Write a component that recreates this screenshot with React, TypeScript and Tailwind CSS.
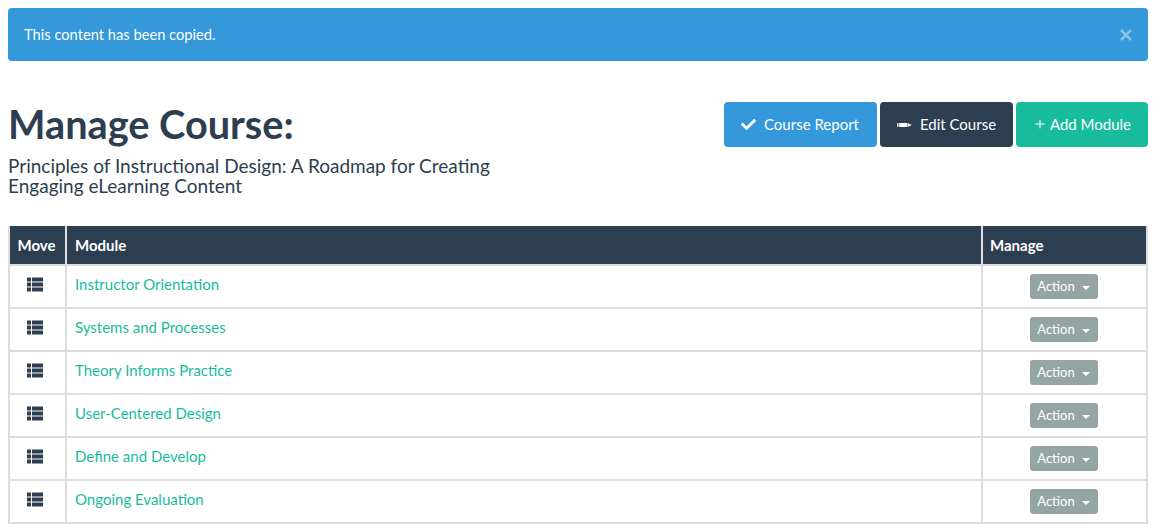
import { Plus } from "lucide-react";
import { FaCheck } from "react-icons/fa";

const modules = [
  "Instructor Orientation",
  "Systems and Processes",
  "Theory Informs Practice",
  "User-Centered Design",
  "Define and Develop",
  "Ongoing Evaluation",
];

const ListIcon = () => (
  <svg width="16" height="15" viewBox="0 0 16 15" className="block" fill="#2c3e50">
    <rect x="0" y="0.5" width="4" height="4" />
    <rect x="5" y="0.5" width="11" height="4" />
    <rect x="0" y="5.5" width="4" height="4" />
    <rect x="5" y="5.5" width="11" height="4" />
    <rect x="0" y="10.5" width="4" height="4" />
    <rect x="5" y="10.5" width="11" height="4" />
  </svg>
);

const PencilIcon = () => (
  <svg width="15" height="6" viewBox="0 0 15 6" fill="white">
    <path d="M0 1.2h1.5v3.6H0zM2.2 1h8.3v4H2.2zM11 1.2l3.8 1.8L11 4.8z" />
  </svg>
);

export default function App() {
  return (
    <div className="min-h-[532px] bg-white px-2 pt-2 font-['Lato','Open_Sans',sans-serif] text-[#2c3e50]">
      <div className="flex h-[53px] items-center justify-between rounded-[4px] bg-[#3498db] pl-4 pr-4 text-[14.7px] text-white">
        <span>This content has been copied.</span>
        <svg width="12" height="12" viewBox="0 0 12 12" className="opacity-40" stroke="white" strokeWidth="2.6">
          <path d="M1 1l10 10M11 1L1 11" />
        </svg>
      </div>

      <div className="mt-[41px] flex items-start justify-between">
        <div>
          <h1 className="-mt-[2px] text-[39.7px] leading-[47px] font-bold">Manage Course:</h1>
          <p className="mt-[9px] w-[500px] text-[19px] leading-5">
            Principles of Instructional Design: A Roadmap for Creating Engaging eLearning Content
          </p>
        </div>
        <div className="flex gap-[3px] text-[15px] text-white">
          <button className="flex h-[45px] w-[153px] items-center justify-center gap-2 rounded-[4px] bg-[#3498db] pr-px">
            <FaCheck size={15} />
            Course Report
          </button>
          <button className="flex h-[45px] w-[133px] items-center justify-center gap-2 rounded-[4px] bg-[#2c3e50]">
            <PencilIcon />
            Edit Course
          </button>
          <button className="flex h-[45px] w-[132px] items-center justify-center gap-[3px] rounded-[4px] bg-[#18bc9c]">
            <Plus size={14} strokeWidth={1.8} className="-mt-px" />
            Add Module
          </button>
        </div>
      </div>

      <table className="mt-[30px] w-[1140px] table-fixed border-collapse text-[15px]">
        <thead>
          <tr className="h-[39px] bg-[#2c3e50] text-left text-white">
            <th className="w-[57px] border-2 border-t-0 border-[#dddddd] pr-[2px] text-center font-bold">Move</th>
            <th className="border-2 border-t-0 border-[#dddddd] pl-2 font-bold">Module</th>
            <th className="w-[165px] border-2 border-t-0 border-[#dddddd] pl-[7px] font-bold">Manage</th>
          </tr>
        </thead>
        <tbody>
          {modules.map((name) => (
            <tr key={name} className="h-[43px]">
              <td className="border-2 border-[#dddddd] pb-[5px] pl-[17px]">
                <ListIcon />
              </td>
              <td className="border-2 border-[#dddddd] pb-[5px] pl-2 text-[#18bc9c]">{name}</td>
              <td className="border-2 border-[#dddddd] pb-[1px] pr-[2px]">
                <button className="mx-auto flex h-[25px] w-[68px] items-center justify-center gap-[7px] rounded-[3px] bg-[#95a5a6] pt-[2px] text-[13px] text-white">
                  Action
                  <span className="mt-[2px] border-x-4 border-t-4 border-x-transparent border-t-white" />
                </button>
              </td>
            </tr>
          ))}
        </tbody>
      </table>
    </div>
  );
}
